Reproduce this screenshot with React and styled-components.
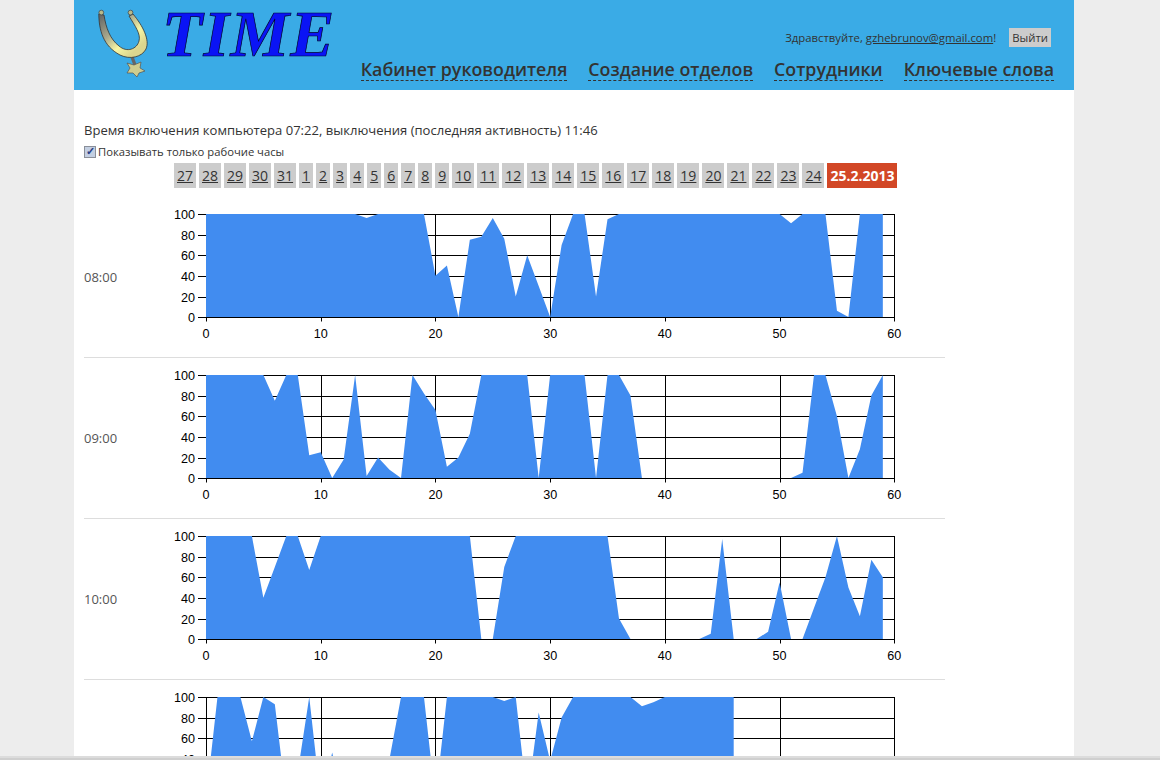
import styled, { createGlobalStyle } from "styled-components";

const GlobalStyle = createGlobalStyle`
  html, body {
    margin: 0;
    height: 100%;
    overflow: hidden;
    background: #ededed;
  }
`;

const days = [27, 28, 29, 30, 31, 1, 2, 3, 4, 5, 6, 7, 8, 9, 10, 11, 12, 13, 14, 15, 16, 17, 18, 19, 20, 21, 22, 23, 24];
const navItems = ["Кабинет руководителя", "Создание отделов", "Сотрудники", "Ключевые слова"];

const full = (n) => Array(n).fill(100);
const zeros = (n) => Array(n).fill(0);

const hours = [
  {
    label: "08:00",
    values: [...full(14), 96, ...full(4), 100, 40, 50, 0, 75, 78, 96, 76, 20, 60, 30, 0, 70, 100, 100, 20, 95, ...full(15), 91, 100, 100, 100, 6, 0, 100, 100, 100],
  },
  {
    label: "09:00",
    values: [...full(6), 75, 100, 100, 22, 25, 0, 18, 100, 2, 20, 8, 0, 100, 82, 66, 11, 20, 43, ...full(5), 0, ...full(4), 0, 100, 100, 80, 0, ...zeros(13), 5, 100, 100, 60, 0, 28, 80, 100],
  },
  {
    label: "10:00",
    values: [...full(5), 40, 70, 100, 100, 67, ...full(14), 0, 0, 70, ...full(9), 20, 0, ...zeros(6), 5, 97, 0, 0, 0, 7, 55, 0, 0, 30, 60, 100, 50, 22, 77, 60],
  },
  {
    label: "11:00",
    values: [0, 100, 100, 100, 57, 100, 93, 0, 27, 100, 0, 46, 0, 0, 0, 0, 40, 100, 100, 100, 0, ...full(5), 96, 100, 0, 85, 38, 80, ...full(6), 91, 95, ...full(7)],
  },
];

const PLOT_X = 36;
const PLOT_W = 688.3;
const PLOT_Y = 8;
const PLOT_H = 103;

const xAt = (i) => PLOT_X + (i * PLOT_W) / 60;
const yAt = (v) => PLOT_Y + PLOT_H - (v * PLOT_H) / 100;
const gridX = (i) => Math.round(xAt(i)) + 0.5;
const gridY = (v) => Math.round(yAt(v) + 0.1) + 0.5;

const Chart = ({ values }) => {
  const last = values.length - 1;
  const points = values.map((v, i) => `${xAt(i)},${yAt(v)}`).join(" ");
  const area = `${xAt(0)},${yAt(0)} ${points} ${xAt(last)},${yAt(0)}`;

  return (
    <svg width="740" height="145" viewBox="0 0 740 145">
      {[0, 20, 40, 60, 80, 100].map((v) => (
        <g key={v}>
          <line x1={PLOT_X - 8} x2={PLOT_X + PLOT_W} y1={gridY(v)} y2={gridY(v)} stroke="#000" />
          <AxisText x={PLOT_X - 11} y={gridY(v) + 4.5} textAnchor="end">{v}</AxisText>
        </g>
      ))}
      {[0, 10, 20, 30, 40, 50, 60].map((v) => (
        <g key={v}>
          <line x1={gridX(v)} x2={gridX(v)} y1={PLOT_Y} y2={gridY(0) + 4} stroke="#000" />
          <AxisText x={xAt(v)} y={gridY(0) + 20} textAnchor="middle">{v}</AxisText>
        </g>
      ))}
      <polygon points={area} fill="#418cf0" />
      <line x1={PLOT_X - 8} x2={PLOT_X + PLOT_W} y1={gridY(0)} y2={gridY(0)} stroke="#000" />
    </svg>
  );
};

const App = () => {
  return (
    <Screen>
      <GlobalStyle />
      <Page>
        <Header>
          <Logo>
            <svg width="56" height="80" viewBox="0 0 56 80">
              <defs>
                <linearGradient id="horn" x1="0" y1="0.1" x2="0.75" y2="0.85">
                  <stop offset="0" stopColor="#6a6a68" />
                  <stop offset="0.4" stopColor="#a8a88c" />
                  <stop offset="0.72" stopColor="#f7f7a4" />
                  <stop offset="1" stopColor="#dcd68e" />
                </linearGradient>
              </defs>
              <path d="M35 57 L38 65" stroke="#666" strokeWidth="3.4" />
              <path d="M1.8 14 C2 30 6 46 23 55 C33 60 45 57 49 49 C53 40 46 26 36 14 L32 16 C38 26 44 34 42 41 C40 49 30 53 22 46 C13 39 9 28 7 15 Z" fill="url(#horn)" stroke="#333" strokeWidth="0.8" />
              <circle cx="4.3" cy="12.6" r="2.4" fill="#b9b98a" stroke="#444" strokeWidth="0.7" />
              <circle cx="33.5" cy="12.6" r="2.4" fill="#b9b98a" stroke="#444" strokeWidth="0.7" />
              <path d="M30 63 L37 65 L44 62 L43 68 L48 71 L42 73 L40 77 L36 73 L30 73 L33 68 Z" fill="#cfcd8f" stroke="#555" strokeWidth="0.7" />
            </svg>
            <LogoText>TIME</LogoText>
          </Logo>
          <HeaderRight>
            <Greeting>
              <span>
                Здравствуйте, <GreetLink href="#">gzhebrunov@gmail.com</GreetLink>!
              </span>
              <LogoutButton>Выйти</LogoutButton>
            </Greeting>
            <Nav>
              {navItems.map((item) => (
                <NavLink key={item} href="#">{item}</NavLink>
              ))}
            </Nav>
          </HeaderRight>
        </Header>

        <Content>
          <Status>Время включения компьютера 07:22, выключения (последняя активность) 11:46</Status>
          <CheckRow>
            <input type="checkbox" defaultChecked />
            Показывать только рабочие часы
          </CheckRow>
          <DayBar>
            {days.map((d, i) => (
              <Day key={i} href="#">{d}</Day>
            ))}
            <CurrentDay>25.2.2013</CurrentDay>
          </DayBar>
          {hours.map((hour) => (
            <HourRow key={hour.label}>
              <HourLabel>{hour.label}</HourLabel>
              <Chart values={hour.values} />
            </HourRow>
          ))}
        </Content>
      </Page>
      <BottomStrip />
    </Screen>
  );
};

export default App;

const Screen = styled.div`
  height: 100vh;
  display: flex;
  flex-direction: column;
  overflow: hidden;
  background: #ededed;
`;

const Page = styled.div`
  flex: 1;
  min-height: 0;
  overflow: hidden;
  width: 1000px;
  margin-left: 74px;
  background: #fff;
  font-family: "Open Sans", "Liberation Sans", sans-serif;
  color: #333;
`;

const Header = styled.header`
  height: 90px;
  background: #3aabe6;
  display: flex;
  justify-content: space-between;
  padding: 0 20px 0 23px;
`;

const Logo = styled.div`
  display: flex;
  align-items: flex-start;
`;

const LogoText = styled.div`
  font-family: "Liberation Serif", serif;
  font-style: italic;
  font-weight: 700;
  font-size: 66px;
  line-height: 79px;
  letter-spacing: 1.2px;
  color: #0a14f5;
  -webkit-text-stroke: 0.7px #000028;
  margin: -6px 0 0 9px;
`;

const HeaderRight = styled.div`
  display: flex;
  flex-direction: column;
  align-items: flex-end;
`;

const Greeting = styled.div`
  display: flex;
  align-items: center;
  gap: 13px;
  margin-top: 28px;
  font-size: 11.35px;
  height: 19px;
  padding-right: 3px;
`;

const GreetLink = styled.a`
  color: #333;
`;

const LogoutButton = styled.span`
  background: #ccc;
  padding: 0 3px;
  line-height: 19px;
  color: #333;
`;

const Nav = styled.nav`
  display: flex;
  gap: 21px;
  margin-top: 11px;
`;

const NavLink = styled.a`
  font-size: 17.8px;
  font-weight: 600;
  line-height: 22px;
  color: #333;
  text-decoration: none;
  border-bottom: 1px dashed #333;
`;

const Content = styled.main`
  padding: 31px 10px 0;
`;

const Status = styled.div`
  font-size: 13.05px;
  line-height: 18px;
`;

const CheckRow = styled.label`
  display: flex;
  align-items: center;
  font-size: 11.25px;
  line-height: 14px;
  margin-top: 6px;

  input {
    appearance: none;
    position: relative;
    width: 12px;
    height: 12px;
    margin: 0 2px 0 0;
    border: 1px solid #8a8f99;
    background: #c3cfe2;
    box-sizing: border-box;
  }

  input:checked::after {
    content: "✓";
    position: absolute;
    left: 1px;
    top: -2px;
    font-size: 11px;
    line-height: 13px;
    font-weight: 700;
    color: #2a3f86;
  }
`;

const DayBar = styled.div`
  display: flex;
  gap: 3px;
  margin: 4px 0 9px 90px;
`;

const Day = styled.a`
  background: #ccc;
  color: #333;
  font-size: 14px;
  line-height: 25px;
  padding: 0 3px;
`;

const CurrentDay = styled.span`
  background: #d24726;
  color: #fff;
  font-size: 14px;
  font-weight: 700;
  line-height: 25px;
  padding: 0 3px;
`;

const HourRow = styled.div`
  display: flex;
  align-items: flex-start;
  width: 861px;
  height: 161px;
  border-bottom: 1px solid #ddd;
  padding-top: 9px;
  box-sizing: border-box;
`;

const HourLabel = styled.div`
  width: 86px;
  margin-top: 62px;
  font-size: 13px;
  line-height: 18px;
  color: #555;
`;

const AxisText = styled.text`
  font-family: "Liberation Sans", Arial, sans-serif;
  font-size: 12.6px;
  fill: #000;
`;

const BottomStrip = styled.div`
  height: 4px;
  flex-shrink: 0;
  background: linear-gradient(#dcdcdc 0 2px, #cfcfcf 2px);
`;
